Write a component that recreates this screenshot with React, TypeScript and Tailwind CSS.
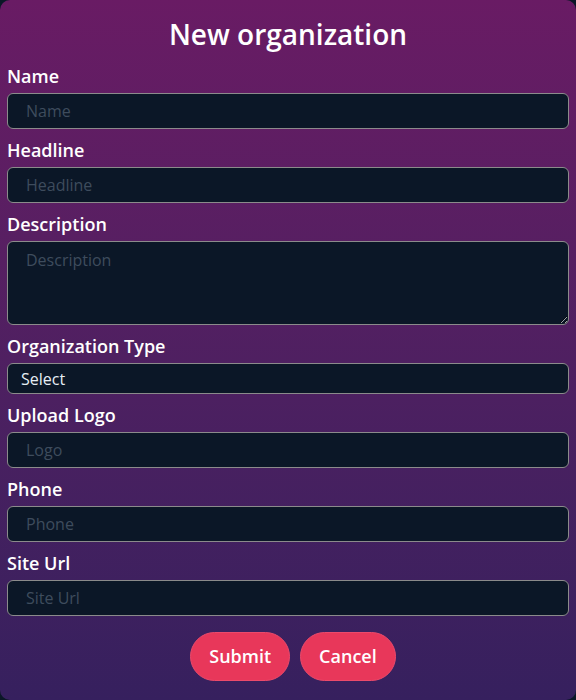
import React from 'react';

const labelCls = "block text-[18px] leading-[27px] font-semibold text-white mb-[3px]";
const inputCls =
  "block w-full h-[36px] rounded-[6px] border border-[#8b8b8b] bg-[#0b1727] pl-[18px] pr-3 text-[16px] text-gray-200 placeholder:text-[#3e4c5d] outline-none";

const Field: React.FC<{ label: string; placeholder: string }> = ({ label, placeholder }) => (
  <div className="mb-2">
    <label className={labelCls}>{label}</label>
    <input type="text" placeholder={placeholder} className={inputCls} />
  </div>
);

export default function App() {
  return (
    <div className="min-h-[700px] bg-[#0b1727] font-['Open_Sans',sans-serif]">
      <div className="h-[700px] rounded-[10px] bg-gradient-to-b from-[#691b64] to-[#36205e] px-[7px] pt-[13px] pb-[19px]">
        <h1 className="text-center text-[28px] leading-[42px] font-semibold text-white mb-[8px]">
          New organization
        </h1>
        <form>
          <Field label="Name" placeholder="Name" />
          <Field label="Headline" placeholder="Headline" />
          <div className="mb-2">
            <label className={labelCls}>Description</label>
            <textarea
              placeholder="Description"
              className="block w-full h-[84px] rounded-[6px] border border-[#8b8b8b] bg-[#0b1727] pl-[18px] pr-3 py-[6px] text-[16px] leading-[24px] text-gray-200 placeholder:text-[#3e4c5d] outline-none"
            />
          </div>
          <div className="mb-2">
            <label className={labelCls}>Organization Type</label>
            <div className="flex items-center h-[31px] rounded-[6px] border border-[#8b8b8b] bg-[#0b1727] pl-[13px] text-[16px] text-[#e6eef5]">
              Select
            </div>
          </div>
          <Field label="Upload Logo" placeholder="Logo" />
          <Field label="Phone" placeholder="Phone" />
          <Field label="Site Url" placeholder="Site Url" />
          <div className="flex justify-center gap-[10px] pt-2 pl-[10px]">
            <button
              type="button"
              className="h-[49px] rounded-full border border-[#ec4a6b] bg-[#e8375a] px-[18px] text-[18px] font-semibold text-white"
            >
              Submit
            </button>
            <button
              type="button"
              className="h-[49px] rounded-full border border-[#ec4a6b] bg-[#e8375a] px-[18px] text-[18px] font-semibold text-white"
            >
              Cancel
            </button>
          </div>
        </form>
      </div>
    </div>
  );
}
